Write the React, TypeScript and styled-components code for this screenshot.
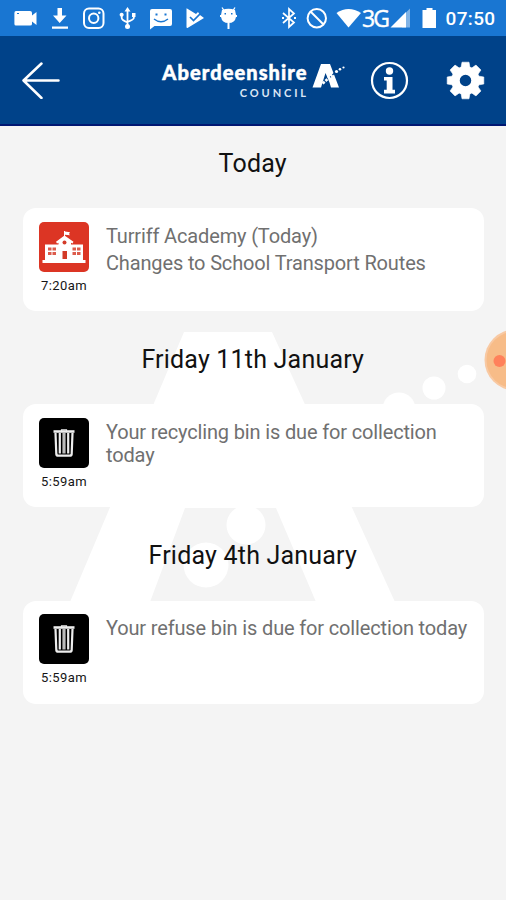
import React from "react";
import styled, { createGlobalStyle } from "styled-components";

const GlobalStyle = createGlobalStyle`
  * { box-sizing: border-box; }
  html, body { margin: 0; padding: 0; background: #f4f4f4; }
  body { font-family: Roboto, "Liberation Sans", sans-serif; overflow: hidden; }
`;

const Screen = styled.div`
  position: relative;
  display: flex;
  flex-direction: column;
  width: 506px;
  height: 900px;
  overflow: hidden;
  background: #f4f4f4;
`;

const StatusBar = styled.div`
  display: flex;
  align-items: center;
  flex: none;
  height: 36px;
  padding: 0 10px 0 13px;
  background: #1976d2;
  color: #fff;
`;

const StatusIcon = styled.svg<{ $gap?: number }>`
  display: block;
  flex: none;
  margin-left: ${({ $gap = 0 }) => $gap}px;
  fill: #fff;
`;

const Network = styled.span`
  width: 27px;
  margin-left: 1px;
  font: 400 23px/36px "Open Sans", sans-serif;
  letter-spacing: -1.8px;
  -webkit-text-stroke: 0.4px #fff;
  white-space: nowrap;
`;

const Clock = styled.span`
  margin-left: auto;
  font-size: 19px;
  line-height: 38px;
  font-weight: 500;
  letter-spacing: 0.35px;
  padding-top: 2px;
  margin-right: 0.5px;
`;

const Header = styled.header`
  display: flex;
  align-items: center;
  flex: none;
  height: 90px;
  padding: 0 21px 1px 22px;
  background: #004289;
  border-bottom: 2px solid #001772;
`;

const IconButton = styled.button<{ $gap?: number }>`
  display: block;
  flex: none;
  padding: 0;
  border: 0;
  background: none;
  margin-left: ${({ $gap = 0 }) => $gap}px;
  svg { display: block; }
`;

const Brand = styled.div`
  display: flex;
  align-items: flex-start;
  flex: none;
  width: 186px;
  height: 38px;
  margin-left: 101px;
  color: #fff;
`;

const BrandText = styled.div`
  display: flex;
  flex-direction: column;
  align-items: flex-end;
  width: 146px;
  font-family: Lato, "Open Sans", sans-serif;
`;

const BrandName = styled.span`
  font-size: 20px;
  line-height: 22px;
  font-weight: 900;
  letter-spacing: 1.08px;
  margin-right: -0.5px;
  -webkit-text-stroke: 0.5px #fff;
  white-space: nowrap;
`;

const BrandKind = styled.span`
  font-size: 11px;
  line-height: 16px;
  margin-top: 2px;
  margin-right: -2px;
  font-weight: 700;
  letter-spacing: 2.9px;
  color: #dbe6f5;
`;

const BrandMark = styled.svg`
  margin: 2px 0 0 5px;
`;

const Feed = styled.main`
  position: relative;
  flex: 1;
  padding: 0 22px 0 23px;
`;

const Watermark = styled.svg`
  position: absolute;
  left: 0;
  top: 0;
  fill: #fff;
`;

const Day = styled.section`
  position: relative;
`;

const DayTitle = styled.h2<{ $first?: boolean }>`
  margin: 0 1.5px 0 0;
  height: ${({ $first }) => ($first ? 82.4 : 93.1)}px;
  padding-top: ${({ $first }) => ($first ? 23 : 34)}px;
  font-size: 25px;
  line-height: 30px;
  font-weight: 400;
  letter-spacing: 0.2px;
  text-align: center;
  color: #111;
`;

const Card = styled.article`
  display: flex;
  height: 103px;
  padding: 13.600px 10px 0 16px;
  border-radius: 13px;
  background: #fff;
`;

const Stamp = styled.div`
  width: 50px;
  flex: none;
`;

const Tile = styled.div<{ $color: string }>`
  height: 50px;
  border-radius: 5px;
  background: ${({ $color }) => $color};
  svg { display: block; }
`;

const Time = styled.div`
  margin: 6.300px -5px 0;
  font-size: 13px;
  line-height: 16px;
  letter-spacing: 0.4px;
  text-align: center;
  color: #151515;
`;

const Message = styled.div`
  margin: 3px 0 0 17px;
  flex: 1;
  font-size: 20px;
  line-height: 23px;
  letter-spacing: -0.15px;
  color: #707070;
  p { margin: 0 0 4px; }
`;

const Bubble = styled.svg`
  position: absolute;
  right: 0;
  top: 328px;
`;

const School = () => (
  <svg width="50" height="50" viewBox="0 0 50 50" fill="#fff">
    <path d="M25 9h1v6h-1zM26 9.5l5 .8-1 1.700 1 1.300-5-.6z" />
    <path d="M25.500 13.500 17 19.700l1 1.700 1.500-.6V22.500H6V38h38V22.500H32v-1.700l1.500.6 1-1.700zM3.500 38h43v3h-43z" />
    <circle cx="25.500" cy="20.500" r="2" fill="#d33a28" />
    <path d="M23.500 29h4.500v8h-4.500z" fill="#d33a28" />
    <g fill="#dc5b4b">
      {[9, 13.5, 33.5, 38].map((x) => [25.5, 30].map((y) => <rect key={`${x}-${y}`} x={x} y={y} width="3.5" height="3" />))}
    </g>
  </svg>
);

const Bin = () => (
  <svg width="50" height="50" viewBox="0 0 50 50" fill="none" stroke="#eee">
    <path d="M22.500 13.500v-1.600h5v1.600" strokeWidth="1.200" />
    <path d="M14.500 13.500h21" strokeWidth="2.600" />
    <path d="m16.500 15 .8 21q.2 1.700 1.800 1.700h11.800q1.600 0 1.800-1.700l.8-21" strokeWidth="2.200" />
    <path d="M20.800 15v20.500M29.200 15v20.500" strokeWidth="2.200" />
    <path d="M25 15v20.500" strokeWidth="3.200" stroke="#bbb" />
  </svg>
);

const days = [
  { title: "Today", color: "#dc3524", icon: <School />, time: "7:20am", lines: ["Turriff Academy (Today)", "Changes to School Transport Routes"] },
  { title: "Friday 11th January", color: "#000", icon: <Bin />, time: "5:59am", lines: ["Your recycling bin is due for collection today"] },
  { title: "Friday 4th January", color: "#000", icon: <Bin />, time: "5:59am", lines: ["Your refuse bin is due for collection today"] },
];

const teeth = [0, 45, 90, 135, 180, 225, 270, 315];

export default function App() {
  return (
    <>
      <GlobalStyle />
      <Screen>
        <StatusBar>
          <StatusIcon width="25" height="24" viewBox="13 6 25 24">
            <path d="M16 11h14q2 0 2 2v2.5l4.5-3.5v13L32 21.500V24q0 1.500-2 1.500H16q-1.600 0-1.600-1.500V13q0-2 1.600-2z" />
            <path d="M17 13.500h2" stroke="#1976d2" />
          </StatusIcon>
          <StatusIcon $gap={13} width="18" height="24" viewBox="51 6 18 24">
            <path d="M57.500 8h4.500v7.500h4.500L59.700 23 53 15.500h4.500zM52 26.500h16v2.200H52z" />
          </StatusIcon>
          <StatusIcon $gap={13} width="23" height="24" viewBox="82 6 23 24">
            <g fill="none" stroke="#fff" strokeWidth="2">
              <rect x="84" y="8.500" width="19.500" height="19.500" rx="5" />
              <circle cx="93.700" cy="18.200" r="4.700" />
            </g>
            <circle cx="99.300" cy="12.800" r="1.300" />
          </StatusIcon>
          <StatusIcon $gap={14} width="17" height="24" viewBox="119 6 17 24">
            <path d="m127.500 7 3 4.500h-6zM132 13h3.500v4H132zM121.700 12.800a2 2 0 1 1-.1 0z" />
            <circle cx="127.500" cy="26.500" r="2.500" />
            <path d="M127.500 10v16M121.700 16v2q0 2 5.800 4.500M133.800 16v2q0 1.500-6.300 4" fill="none" stroke="#fff" strokeWidth="1.800" />
          </StatusIcon>
          <StatusIcon $gap={13} width="24" height="24" viewBox="149 6 24 24">
            <path d="M152 9h18q2 0 2 2v13q0 2-2 2h-15.500L150 29.500V11q0-2 2-2z" />
            <path d="M154 19q7 5.500 14 0" fill="none" stroke="#1976d2" strokeWidth="1.500" />
            <path d="M155.500 13.500h2v2h-2zM164.500 13.500h2v2h-2z" fill="#1976d2" />
          </StatusIcon>
          <StatusIcon $gap={12} width="20" height="24" viewBox="185 6 20 24">
            <path d="M187 8.500 196 14l2-2 2 3 4 3-16.500 10q-1 .2-1-1V9q0-1 .5-.5z" />
            <path d="m190 17 3.500 3.500L202 12" fill="none" stroke="#1976d2" strokeWidth="1.700" />
          </StatusIcon>
          <StatusIcon $gap={14} width="20" height="24" viewBox="219 6 20 24">
            <path d="M222 10q6.500-2.500 13 0l1 5v2q-1 6-7.500 6t-7.500-6v-2zM227.500 22h2v7h-2zM220 15h17v2h-17z" />
            <path d="m222 7.500 2 3M235 7.500l-2 3" stroke="#fff" strokeWidth="1.300" />
            <path d="M224.500 13h1.500v1.500h-1.500zM231 13h1.500v1.500H231z" fill="#1976d2" />
          </StatusIcon>
          <StatusIcon $gap={42} width="16" height="24" viewBox="281 6 16 24">
            <path d="m283 13 11 9.500-5 4.500V9l5 4.500-11 9.500" fill="none" stroke="#fff" strokeWidth="1.700" />
            <path d="M282 17h2v2h-2zM294 17h2v2h-2z" />
          </StatusIcon>
          <StatusIcon $gap={9} width="22" height="24" viewBox="306 6 22 24">
            <g fill="none" stroke="#fff" strokeWidth="2">
              <circle cx="316.800" cy="18.200" r="9.200" />
              <path d="m310.500 11.500 13 13" />
            </g>
          </StatusIcon>
          <StatusIcon $gap={8} width="25" height="24" viewBox="336 6 25 24">
            <path d="M336.500 13q12-8 24.500 0L348.500 27.500z" />
          </StatusIcon>
          <Network>3G</Network>
          <StatusIcon $gap={1} width="21" height="24" viewBox="390 6 21 24">
            <path d="M410 8.500v19h-8v-11z" opacity=".45" />
            <path d="M406 12v15.500h-15.500z" />
          </StatusIcon>
          <StatusIcon $gap={11} width="15" height="24" viewBox="422 6 15 24">
            <path d="M426.500 8h6v2h3.500v18h-13.500V10h4z" />
          </StatusIcon>
          <Clock>07:50</Clock>
        </StatusBar>
        <Header>
          <IconButton aria-label="Back">
            <svg width="38" height="38" viewBox="0 0 38 38" fill="none" stroke="#fff" strokeWidth="2.500" strokeLinecap="round" strokeLinejoin="round">
              <path d="M19.500 2.500 1.500 19.500l18 17.500M2 19.500h34.500" />
            </svg>
          </IconButton>
          <Brand>
            <BrandText>
              <BrandName>Aberdeenshire</BrandName>
              <BrandKind>COUNCIL</BrandKind>
            </BrandText>
            <BrandMark width="34" height="27" viewBox="-1 0 34 27" fill="#fff">
              <path d="M8 1h9l9 23.500h-8l-1.500-5-4-9.500-4.500 14.500H-.5z" />
              <path d="M17 14.500 22 9.500" stroke="#004289" strokeWidth="1.200" fill="none" />
              <path d="M9.500 20.500q6-5 10-9" stroke="#fff" strokeWidth="2.600" strokeDasharray="2.500 1" fill="none" />
              <circle cx="23.500" cy="8.500" r="1.600" />
              <circle cx="27" cy="6.300" r="1.300" />
              <circle cx="30.500" cy="4.500" r="1.100" />
            </BrandMark>
          </Brand>
          <IconButton $gap={22} aria-label="Information">
            <svg width="40" height="40" viewBox="-0.500 0 40 40" fill="#fff">
              <circle cx="20" cy="20.500" r="17.500" fill="none" stroke="#fff" strokeWidth="2.200" />
              <circle cx="20" cy="11" r="3.700" />
              <path d="M14.500 17h8.500v12.800h2.500v3.700H14.500v-3.700h2.700v-9.200h-2.700z" />
            </svg>
          </IconButton>
          <IconButton $gap={36} aria-label="Settings">
            <svg width="40" height="40" viewBox="-20.500 -20.500 40 40" fill="#fff">
              <circle r="10" fill="none" stroke="#fff" strokeWidth="8.500" />
              {teeth.map((a) => (
                <path key={a} d="M-4.800-11-3.500-18.300h7L4.800-11z" transform={`rotate(${a})`} strokeLinejoin="round" stroke="#fff" strokeWidth=".6" />
              ))}
            </svg>
          </IconButton>
        </Header>
        <Feed>
          <Watermark width="506" height="500" viewBox="0 126 506 500">
            <path d="M184 332h88l123 270h-79l-40-94h-91l-35 94H70z" />
            <circle cx="246" cy="525" r="19.500" />
            <circle cx="206" cy="565" r="22.500" />
            <circle cx="399" cy="409" r="16.500" />
            <circle cx="434" cy="388" r="11.500" />
            <circle cx="467" cy="374" r="9.300" />
          </Watermark>
          {days.map((day, i) => (
            <Day key={day.title}>
              <DayTitle $first={i === 0}>{day.title}</DayTitle>
              <Card>
                <Stamp>
                  <Tile $color={day.color}>{day.icon}</Tile>
                  <Time>{day.time}</Time>
                </Stamp>
                <Message>
                  {day.lines.map((line) => <p key={line}>{line}</p>)}
                </Message>
              </Card>
            </Day>
          ))}
        </Feed>
        <Bubble width="24" height="64" viewBox="0 0 24 64">
          <circle cx="33" cy="32" r="30.500" fill="#f8c9a3" />
          <circle cx="33" cy="32" r="28.500" fill="#f7bc88" />
          <circle cx="17.500" cy="33" r="6" fill="#ff815b" />
        </Bubble>
      </Screen>
    </>
  );
}
